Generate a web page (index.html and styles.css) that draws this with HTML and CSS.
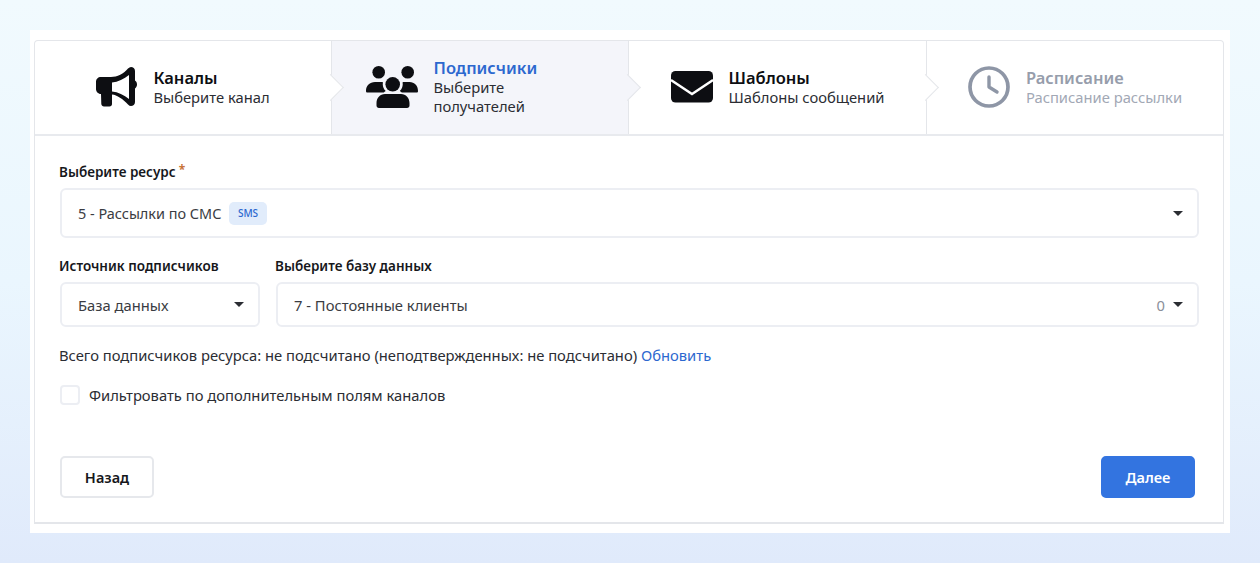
FILE: index.html
```html
<!DOCTYPE html>
<html lang="ru">
<head>
<meta charset="utf-8">
<title>Рассылка</title>
<link rel="stylesheet" href="styles.css">
</head>
<body>
<div class="panel">
  <div class="card">
    <div class="steps">
      <div class="step first">
        <svg class="icon" width="41" height="40" viewBox="0 0 41 40"><path fill="#0d0e12" fill-rule="evenodd" d="M35 0c2 0 4 1.500 4 4v9.500c1.200.8 2 2.200 2 4s-.8 3.200-2 4V35c0 2.500-2 4-4 4-1 0-2-.5-3-1.500C27 32 21 28 16 27.500V37c0 1.500-1 2.500-2.500 2.500H8c-1.500 0-2.500-1-2.700-2.500L5 27c-3 0-5-2.500-5-5v-7c0-3 2-5 5-5h10c6 0 13-3.500 17-8.500C33 .5 34 0 35 0zM33 8c-5 4-11 7-17 7.500v9c6 .5 12 3.500 17 7.500z"/></svg>
        <div class="step-text"><div class="step-title">Каналы</div><div class="step-sub">Выберите канал</div></div>
      </div>
      <div class="step active">
        <svg class="icon" width="52" height="42" viewBox="0 0 52 42"><g fill="#0d0e12"><circle cx="12.700" cy="6.300" r="6.300"/><circle cx="41.700" cy="6.300" r="6.300"/><circle cx="26.700" cy="18.300" r="7.300"/><path d="M9 16h6.500c.5 0 1 .1 1.400.3-.6 3.300.4 6.500 2.800 8.700-.8.400-1.400.9-2 1.500H1.500C.5 26.500 0 25.800 0 24.900 0 19.800 3.800 16 9 16zM37 16h6.500c5 0 8.500 3.800 8.500 8.900 0 .9-.5 1.600-1.500 1.600H35.800c-.6-.6-1.200-1.100-2-1.500 2.400-2.200 3.400-5.400 2.800-8.700.4-.2.900-.3 1.400-.3zM19 28h16c5 0 8.500 4 8.500 9v2.500c0 1.500-1 2.500-2.500 2.500H13c-1.500 0-2.500-1-2.500-2.500V37c0-5 3.500-9 8.500-9z"/></g></svg>
        <div class="step-text"><div class="step-title">Подписчики</div><div class="step-sub">Выберите получателей</div></div>
      </div>
      <div class="step">
        <svg class="icon" width="42" height="32" viewBox="0 0 42 32"><rect width="42" height="31.500" rx="4.500" fill="#0d0e12"/><path d="M0 9l21 14L42 9" fill="none" stroke="#fff" stroke-width="2.300"/></svg>
        <div class="step-text"><div class="step-title">Шаблоны</div><div class="step-sub">Шаблоны сообщений</div></div>
      </div>
      <div class="step disabled">
        <svg class="icon" width="42" height="42" viewBox="0 0 42 42" fill="none" stroke="#8e96a6"><circle cx="21" cy="21" r="19" stroke-width="3.700"/><path d="M21 11V21L29 26" stroke-width="3.400" stroke-linecap="round" stroke-linejoin="round"/></svg>
        <div class="step-text"><div class="step-title">Расписание</div><div class="step-sub">Расписание рассылки</div></div>
      </div>
    </div>
    <form class="form">
      <div class="field">
        <div class="label">Выберите ресурс<span class="req">*</span></div>
        <div class="select tall"><span class="value">5 - Рассылки по СМС</span><span class="badge">SMS</span><span class="caret"></span></div>
      </div>
      <div class="row">
        <div class="field source">
          <div class="label">Источник подписчиков</div>
          <div class="select"><span class="value">База данных</span><span class="caret"></span></div>
        </div>
        <div class="field base">
          <div class="label">Выберите базу данных</div>
          <div class="select"><span class="value">7 - Постоянные клиенты</span><span class="count">0</span><span class="caret near"></span></div>
        </div>
      </div>
      <p class="summary">Всего подписчиков ресурса: не подсчитано (неподтвержденных: не подсчитано) <a class="link">Обновить</a></p>
      <div class="check"><span class="box"></span><span>Фильтровать по дополнительным полям каналов</span></div>
      <div class="actions">
        <button type="button" class="btn">Назад</button>
        <button type="button" class="btn primary">Далее</button>
      </div>
    </form>
  </div>
</div>
</body>
</html>
```
FILE: styles.css
```css
* { box-sizing: border-box; }
html, body { margin: 0; height: 563px; overflow: hidden; }
body {
  background: linear-gradient(180deg, #f1fafe 0%, #eaf6fe 50%, #e0eafb 100%);
  padding: 30px 30px;
  font-family: "Noto Sans", sans-serif;
  font-size: 14.75px;
  color: #2b2d33;
}
.panel {
  background: #fff;
  height: 503px;
  padding: 10px 6px 9px 4px;
}
.card {
  height: 484px;
  border: 1px solid #e4e6ea;
  border-bottom-width: 2px;
  border-radius: 4px 4px 0 0;
  display: flex;
  flex-direction: column;
}
.steps {
  display: grid;
  grid-template-columns: 296px 297px 298px 1fr;
  height: 95px;
  border-bottom: 2px solid #e8eaee;
}
.step {
  position: relative;
  display: flex;
  align-items: center;
  justify-content: center;
  gap: 16px;
  border-left: 1px solid #e4e6ea;
  padding-bottom: 1px;
}
.step.first { border-left: 0; }
.step.active { background: #f4f5fa; }
.step::after {
  content: "";
  position: absolute;
  right: -9px;
  top: 37px;
  width: 18px;
  height: 18px;
  background: #fff;
  border-top: 1.5px solid #e4e6ea;
  border-right: 1.5px solid #e4e6ea;
  transform: rotate(45deg);
  z-index: 1;
}
.step.active::after { background: #f4f5fa; }
.step.disabled::after { display: none; }
.icon { flex: none; }
.step-text { max-width: 161px; }
.step-title { font-size: 16.5px; font-weight: 600; line-height: 20px; color: #0d0e12; }
.step-sub { font-size: 14.75px; line-height: 19px; color: #2b2d33; }
.active .step-title { color: #2c68cf; }
.disabled .step-title { color: #969dab; }
.disabled .step-sub { color: #a2a8b5; }
.form {
  flex: 1;
  padding: 26px 24px 24px 25px;
  display: flex;
  flex-direction: column;
}
.label {
  font-size: 13.5px;
  font-weight: 600;
  line-height: 20px;
  color: #16171b;
  margin: 0 0 6px -1px;
}
.req { color: #c8743a; font-size: 12px; font-weight: 700; vertical-align: 3px; margin-left: 3px; line-height: 0; }
.select {
  display: flex;
  align-items: center;
  height: 45px;
  padding: 0 14px 0 16px;
  border: 2px solid #eceef3;
  border-radius: 6px;
  color: #3a3c42;
}
.select.tall { height: 50px; font-size: 14.45px; }
.badge {
  margin-left: 8px;
  padding: 0 8.5px;
  height: 23px;
  line-height: 23px;
  background: #e1ecfb;
  color: #2c68cf;
  border-radius: 5px;
  font-size: 10px;
  font-weight: 500;
}
.caret {
  margin-left: auto;
  width: 0;
  height: 0;
  border-left: 5px solid transparent;
  border-right: 5px solid transparent;
  border-top: 5.5px solid #2b2d33;
}
.caret.near { margin-left: 8px; }
.count { margin-left: auto; color: #8a8f9a; }
.row { display: flex; gap: 16px; margin-top: 18px; }
.source { width: 200px; flex: none; }
.base { flex: 1; }
.summary { margin: 18px 0 0 -1px; line-height: 20px; }
.link { color: #2c68cf; }
.check { display: flex; align-items: center; gap: 9px; margin-top: 20px; line-height: 20px; }
.box { width: 20px; height: 20px; border: 2px solid #eceef3; border-radius: 4px; background: #fff; }
.actions { display: flex; justify-content: space-between; margin-top: auto; padding-right: 4px; }
.btn {
  width: 94px;
  height: 42px;
  font-family: inherit;
  font-size: 14.5px;
  font-weight: 600;
  color: #16171b;
  background: #fff;
  border: 2px solid #e6e8ec;
  border-radius: 5px;
  padding: 0;
}
.btn.primary { background: #3374e0; border-color: #3374e0; color: #fff; }
```
